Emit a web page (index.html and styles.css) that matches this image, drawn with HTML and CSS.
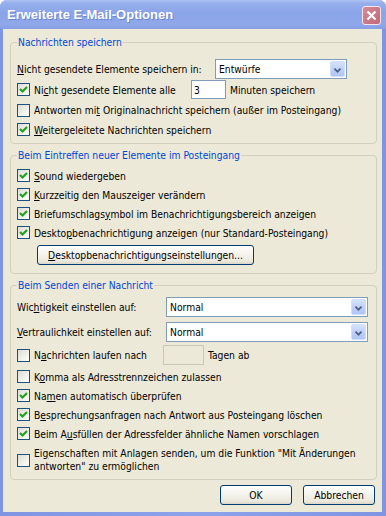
FILE: index.html
```html
<!DOCTYPE html>
<html lang="de">
<head>
<meta charset="utf-8">
<title>Erweiterte E-Mail-Optionen</title>
<link rel="stylesheet" href="styles.css">
</head>
<body>
<div class="window">
  <div class="titlebar">
    <span class="title">Erweiterte E-Mail-Optionen</span>
    <span class="close"><svg width="13" height="13" viewBox="0 0 13 13"><path d="M2.5 2.5 L10.5 10.5 M10.5 2.5 L2.5 10.5" stroke="#fff" stroke-width="2.2" fill="none"/></svg></span>
  </div>
  <div class="client">
    <fieldset class="group g1">
      <legend>Nachrichten speichern</legend>
      <div class="row r21">
        <span class="lbl w198"><u>N</u>icht gesendete Elemente speichern in:</span>
        <span class="combo c1"><span class="val">Entwürfe</span><span class="drop"><svg width="15" height="16" viewBox="0 0 15 16"><polyline points="4,6.5 7.5,10 11,6.5" stroke="#4d6185" stroke-width="2" fill="none"/></svg></span></span>
      </div>
      <div class="row r21">
        <span class="cb on"><svg width="11" height="11" viewBox="0 0 11 11"><polyline points="2,5 4.5,7.5 9,3" stroke="#21a121" stroke-width="2.2" fill="none"/></svg></span>
        <span class="lbl w157">Ni<u>c</u>ht gesendete Elemente alle</span>
        <span class="edit e3">3</span>
        <span class="after">Minuten speichern</span>
      </div>
      <div class="row r20">
        <span class="cb"></span>
        <span>Antworten mi<u>t</u> Originalnachricht speichern (außer im Posteingang)</span>
      </div>
      <div class="row r19">
        <span class="cb on"><svg width="11" height="11" viewBox="0 0 11 11"><polyline points="2,5 4.5,7.5 9,3" stroke="#21a121" stroke-width="2.2" fill="none"/></svg></span>
        <span><u>W</u>eitergeleitete Nachrichten speichern</span>
      </div>
    </fieldset>

    <fieldset class="group g2">
      <legend>Beim Eintreffen neuer Elemente im Posteingang</legend>
      <div class="row r19">
        <span class="cb on"><svg width="11" height="11" viewBox="0 0 11 11"><polyline points="2,5 4.5,7.5 9,3" stroke="#21a121" stroke-width="2.2" fill="none"/></svg></span>
        <span><u>S</u>ound wiedergeben</span>
      </div>
      <div class="row r19">
        <span class="cb on"><svg width="11" height="11" viewBox="0 0 11 11"><polyline points="2,5 4.5,7.5 9,3" stroke="#21a121" stroke-width="2.2" fill="none"/></svg></span>
        <span><u>K</u>urzzeitig den Mauszeiger verändern</span>
      </div>
      <div class="row r19">
        <span class="cb on"><svg width="11" height="11" viewBox="0 0 11 11"><polyline points="2,5 4.5,7.5 9,3" stroke="#21a121" stroke-width="2.2" fill="none"/></svg></span>
        <span>Briefumschlags<u>y</u>mbol im Benachrichtigungsbereich anzeigen</span>
      </div>
      <div class="row r19">
        <span class="cb on"><svg width="11" height="11" viewBox="0 0 11 11"><polyline points="2,5 4.5,7.5 9,3" stroke="#21a121" stroke-width="2.2" fill="none"/></svg></span>
        <span>Deskto<u>p</u>benachrichtigung anzeigen (nur Standard-Posteingang)</span>
      </div>
      <div class="row btnrow">
        <span class="btn wide"><u>D</u>esktopbenachrichtigungseinstellungen...</span>
      </div>
    </fieldset>

    <fieldset class="group g3">
      <legend>Beim Senden einer Nachricht</legend>
      <div class="row r20 first">
        <span class="lbl w149">Wic<u>h</u>tigkeit einstellen auf:</span>
        <span class="combo c2"><span class="val">Normal</span><span class="drop"><svg width="15" height="16" viewBox="0 0 15 16"><polyline points="4,6.5 7.5,10 11,6.5" stroke="#4d6185" stroke-width="2" fill="none"/></svg></span></span>
      </div>
      <div class="row r20 m5">
        <span class="lbl w149"><u>V</u>ertraulichkeit einstellen auf:</span>
        <span class="combo c2"><span class="val">Normal</span><span class="drop"><svg width="15" height="16" viewBox="0 0 15 16"><polyline points="4,6.5 7.5,10 11,6.5" stroke="#4d6185" stroke-width="2" fill="none"/></svg></span></span>
      </div>
      <div class="row r20 m3">
        <span class="cb"></span>
        <span class="lbl w129">N<u>a</u>chrichten laufen nach</span>
        <span class="edit dis"></span>
        <span class="after">Tagen ab</span>
      </div>
      <div class="row r19 m2">
        <span class="cb"></span>
        <span>K<u>o</u>mma als Adresstrennzeichen zulassen</span>
      </div>
      <div class="row r19">
        <span class="cb on"><svg width="11" height="11" viewBox="0 0 11 11"><polyline points="2,5 4.5,7.5 9,3" stroke="#21a121" stroke-width="2.2" fill="none"/></svg></span>
        <span>Na<u>m</u>en automatisch überprüfen</span>
      </div>
      <div class="row r19">
        <span class="cb on"><svg width="11" height="11" viewBox="0 0 11 11"><polyline points="2,5 4.5,7.5 9,3" stroke="#21a121" stroke-width="2.2" fill="none"/></svg></span>
        <span>B<u>e</u>sprechungsanfragen nach Antwort aus Posteingang löschen</span>
      </div>
      <div class="row r19">
        <span class="cb on"><svg width="11" height="11" viewBox="0 0 11 11"><polyline points="2,5 4.5,7.5 9,3" stroke="#21a121" stroke-width="2.2" fill="none"/></svg></span>
        <span>Beim A<u>u</u>sfüllen der Adressfelder ähnliche Namen vorschlagen</span>
      </div>
      <div class="row two">
        <span class="cb"></span>
        <span class="multi">Ei<u>g</u>enschaften mit Anlagen senden, um die Funktion "Mit Änderungen antworten" zu ermöglichen</span>
      </div>
    </fieldset>

    <div class="footer">
      <span class="btn std">OK</span>
      <span class="btn std">Abbrechen</span>
    </div>
  </div>
</div>
</body>
</html>
```

FILE: styles.css
```css
html, body {
  margin: 0;
  padding: 0;
  background: #ffffff;
}

body {
  font-family: "DejaVu Sans Condensed", "DejaVu Sans", sans-serif;
  font-size: 10.25px;
  color: #000;
}

.window {
  width: 386px;
  height: 516px;
  display: flex;
  flex-direction: column;
  background: linear-gradient(90deg, #7f95e3 0, #8ca2ea 50%, #7f95e3 100%);
  border-radius: 7px 7px 0 0;
  overflow: hidden;
}

.titlebar {
  height: 29px;
  flex: none;
  display: flex;
  align-items: center;
  padding: 0 5px 0 7px;
  background: linear-gradient(180deg, #b0c4f4 0, #96afec 3px, #8aa4e8 45%, #90a8ea 85%, #859de3 100%);
}

.title {
  flex: 1;
  color: #fff;
  font-family: "Liberation Sans", sans-serif;
  font-weight: bold;
  font-size: 13px;
  text-shadow: 1px 1px 0 #6d84cc;
}

.close {
  width: 19px;
  height: 19px;
  box-sizing: border-box;
  border: 1px solid #f4e6ea;
  border-radius: 3px;
  background: linear-gradient(135deg, #d88894, #c0697a);
  display: flex;
  align-items: center;
  justify-content: center;
  margin-top: 1px;
}

.client {
  flex: 1;
  margin: 0 4px 4px 3px;
  background: #ece9d8;
  padding: 7px 5px 0 7px;
  display: flex;
  flex-direction: column;
}

.group {
  margin: 0;
  padding: 0 6px 0 6px;
  border: 1px solid #d0d0bf;
  border-radius: 4px;
  min-width: 0;
}

.group legend {
  padding: 0 1px;
  margin-left: 0;
  color: #0046d5;
  line-height: 13px;
}

.g1 { padding-top: 9px; padding-bottom: 4px; }
.g2 { margin-top: 5px; padding-top: 4px; padding-bottom: 8px; }
.g3 { margin-top: 5px; padding-top: 0; padding-bottom: 6px; }

.row {
  display: flex;
  align-items: center;
  white-space: nowrap;
}

.r21 { height: 21px; }
.r20 { height: 20px; }
.r19 { height: 19px; }
.first { margin-top: 5px; }
.m5 { margin-top: 5px; }
.m3 { margin-top: 3px; }
.m2 { margin-top: 2px; }

.lbl { flex: none; }
.w198 { width: 198px; }
.w157 { width: 157px; }
.w149 { width: 149px; }
.w129 { width: 129px; }

.after { margin-left: 4px; }

.cb {
  width: 13px;
  height: 13px;
  box-sizing: border-box;
  flex: none;
  border: 1px solid #1c5180;
  background: linear-gradient(135deg, #dcdcd5 0, #f0f0ea 55%, #ffffff 100%);
  margin-right: 4px;
  display: flex;
}

.combo {
  height: 20px;
  box-sizing: border-box;
  border: 1px solid #7f9db9;
  background: #fff;
  display: flex;
  align-items: center;
  padding: 1px 1px 1px 3px;
  flex: none;
}

.c1 { width: 132px; }
.c2 { width: 202px; }

.combo .val { flex: 1; }

.drop {
  width: 15px;
  height: 16px;
  box-sizing: border-box;
  border: 1px solid #d2defc;
  border-radius: 2px;
  background: linear-gradient(180deg, #d6e1fc 0, #bccef8 60%, #b1c5f6 100%);
  display: flex;
}

.edit {
  width: 35px;
  height: 19px;
  box-sizing: border-box;
  border: 1px solid #7f9db9;
  background: #fff;
  padding-left: 2px;
  display: flex;
  align-items: center;
  flex: none;
}

.edit.dis {
  width: 41px;
  height: 20px;
  border-color: #c9c7ba;
  background: #ece9d8;
}

.btnrow {
  margin-top: 3px;
}

.btn {
  height: 20px;
  box-sizing: border-box;
  border: 1px solid #003c74;
  border-radius: 3px;
  background: linear-gradient(180deg, #ffffff 0, #f6f5ef 40%, #ebe8dc 85%, #d9d4c6 100%);
  display: flex;
  align-items: center;
  justify-content: center;
  flex: none;
}

.wide {
  width: 217px;
  margin-left: 20px;
}

.two {
  margin-top: 4px;
  align-items: flex-start;
}

.two .cb { margin-top: 7px; }

.multi {
  white-space: normal;
  line-height: 13px;
}

.footer {
  display: flex;
  justify-content: flex-end;
  gap: 11px;
  margin-top: 5px;
  margin-right: 2px;
}

.std { width: 72px; }
```
